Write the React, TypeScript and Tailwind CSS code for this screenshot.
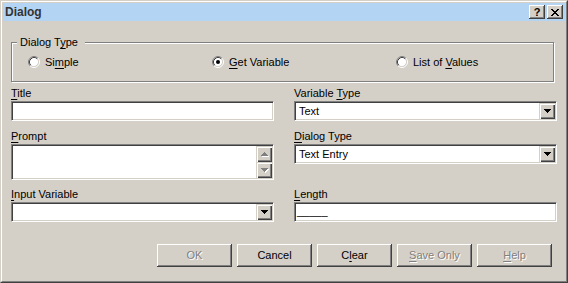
import type { ReactNode } from "react";

// classic 3D edges, reused by every control
const sunken =
  "bg-white border border-t-[#808080] border-l-[#808080] border-r-white border-b-white shadow-[inset_1px_1px_0_#404040,inset_-1px_-1px_0_#d4d0c8]";
const raised =
  "bg-[#d4d0c8] shadow-[inset_-1px_-1px_0_#404040,inset_1px_1px_0_#ffffff,inset_-2px_-2px_0_#808080,inset_2px_2px_0_#d4d0c8]";
const smallRaised =
  "bg-[#d4d0c8] shadow-[inset_1px_1px_0_#d4d0c8,inset_2px_2px_0_#ffffff,inset_-1px_-1px_0_#404040,inset_-2px_-2px_0_#808080]";
const disabled = "text-[#808080] [text-shadow:1px_1px_0_#ffffff]";

function Key({ children }: { children: ReactNode }) {
  return <span className="underline underline-offset-[2px]">{children}</span>;
}

function Radio({ checked }: { checked?: boolean }) {
  return (
    <svg width="12" height="12" viewBox="0 0 12 12" className="shrink-0">
      <circle cx="6" cy="6" r="4.5" fill="#fff" />
      <path d="M2.11 9.89A5.5 5.5 0 0 1 9.89 2.11" stroke="#808080" fill="none" />
      <path d="M9.89 2.11A5.5 5.5 0 0 1 2.11 9.89" stroke="#fff" fill="none" />
      <path d="M2.82 9.18A4.5 4.5 0 0 1 9.18 2.82" stroke="#404040" fill="none" />
      <path d="M9.18 2.82A4.5 4.5 0 0 1 2.82 9.18" stroke="#d4d0c8" fill="none" />
      {checked && <circle cx="6" cy="6" r="2" fill="#000" />}
    </svg>
  );
}

function Arrow({ up, off }: { up?: boolean; off?: boolean }) {
  const d = up
    ? "M3 0h1v1H3zM2 1h3v1H2zM1 2h5v1H1zM0 3h7v1H0z"
    : "M0 0h7v1H0zM1 1h5v1H1zM2 2h3v1H2zM3 3h1v1H3z";
  return (
    <svg width="8" height="5" viewBox="0 0 8 5" shapeRendering="crispEdges">
      {off && <path d={d} fill="#fff" transform="translate(1 1)" />}
      <path d={d} fill={off ? "#808080" : "#000"} />
    </svg>
  );
}

function Label({ children }: { children: ReactNode }) {
  return <div className="mb-[2px] h-[13px] pt-[1px] leading-[13px] text-black">{children}</div>;
}

function Combo({ value = "" }: { value?: string }) {
  return (
    <div className={`${sunken} flex h-[20px] p-[1px]`}>
      <span className="flex-1 pl-[3px] pt-[1px] leading-[15px] text-black">{value}</span>
      <span className={`${smallRaised} flex w-[16px] items-center justify-center pl-[1px]`}>
        <Arrow />
      </span>
    </div>
  );
}

function Button({ children, off }: { children: ReactNode; off?: boolean }) {
  return (
    <div
      className={`${raised} flex h-[23px] w-[75px] items-center justify-center ${off ? disabled : "text-black"}`}
    >
      {children}
    </div>
  );
}

export default function App() {
  return (
    <div className="h-[283px] w-[568px] border border-t-[#d4d0c8] border-l-[#d4d0c8] border-r-[#404040] border-b-[#404040] bg-[#d4d0c8] font-['Liberation_Sans',Arial,sans-serif] text-[11px]">
      <div className="flex h-full flex-col border border-t-white border-l-white border-r-[#808080] border-b-[#808080] p-[1px]">
        {/* title bar */}
        <div className="flex h-[18px] items-center justify-between bg-[#b4d4f4] pl-[2px] pr-[2px]">
          <span className="text-[12px] font-bold text-[#333333]">Dialog</span>
          <div className="flex gap-[2px]">
            <span
              className={`${raised} flex h-[14px] w-[16px] items-center justify-center text-[11px] leading-none font-bold text-black`}
            >
              ?
            </span>
            <span className={`${raised} flex h-[14px] w-[16px] items-center justify-center`}>
              <svg width="8" height="7" viewBox="0 0 8 7" shapeRendering="crispEdges">
                <path
                  d="M0 0h2v1H0zM6 0h2v1H6zM1 1h2v1H1zM5 1h2v1H5zM2 2h4v1H2zM3 3h2v1H3zM2 4h4v1H2zM1 5h2v1H1zM5 5h2v1H5zM0 6h2v1H0zM6 6h2v1H6z"
                  fill="#000"
                />
              </svg>
            </span>
          </div>
        </div>

        <div className="flex flex-1 flex-col px-[8px]">
          {/* Dialog Type group */}
          <div className="relative mt-[21px] flex h-[40px] w-[543px] items-center border border-[#808080] pl-[16px] shadow-[1px_1px_0_#ffffff,inset_1px_1px_0_#ffffff]">
            <span className="absolute -top-[7px] left-[5px] bg-[#d4d0c8] pr-[7px] pl-[3px] leading-[13px] text-black">
              Dialog T<Key>y</Key>pe
            </span>
            <label className="flex w-[184px] items-center gap-[5px] text-black">
              <Radio />
              <span>
                Si<Key>m</Key>ple
              </span>
            </label>
            <label className="flex w-[184px] items-center gap-[5px] text-black">
              <Radio checked />
              <span>
                <Key>G</Key>et Variable
              </span>
            </label>
            <label className="flex w-[150px] items-center gap-[5px] text-black">
              <Radio />
              <span>
                List of <Key>V</Key>alues
              </span>
            </label>
          </div>

          {/* fields */}
          <div className="mt-[4px] grid grid-cols-2 gap-x-[20px]">
            <div>
              <Label>
                <Key>T</Key>itle
              </Label>
              <div className={`${sunken} h-[20px]`} />
            </div>
            <div>
              <Label>
                Variable <Key>T</Key>ype
              </Label>
              <Combo value="Text" />
            </div>

            <div className="mt-[8px]">
              <Label>
                <Key>P</Key>rompt
              </Label>
              <div className={`${sunken} flex h-[36px] justify-end p-[1px]`}>
                <div className="flex w-[16px] flex-col">
                  <span className={`${smallRaised} flex h-[16px] items-center justify-center pl-[1px]`}>
                    <Arrow up off />
                  </span>
                  <span className={`${smallRaised} flex h-[16px] items-center justify-center pl-[1px]`}>
                    <Arrow off />
                  </span>
                </div>
              </div>
            </div>
            <div className="mt-[8px]">
              <Label>
                <Key>D</Key>ialog Type
              </Label>
              <Combo value="Text Entry" />
            </div>

            <div className="mt-[7px]">
              <Label>
                <Key>I</Key>nput Variable
              </Label>
              <Combo />
            </div>
            <div className="mt-[7px]">
              <Label>
                <Key>L</Key>ength
              </Label>
              <div className={`${sunken} h-[20px] pl-[2px] pt-[1px] leading-[15px] text-black`}>_____</div>
            </div>
          </div>

          {/* buttons */}
          <div className="mt-[22px] mr-[5px] flex justify-end gap-[5px]">
            <Button off>OK</Button>
            <Button>Cancel</Button>
            <Button>
              C<Key>l</Key>ear
            </Button>
            <Button off>
              <Key>S</Key>ave Only
            </Button>
            <Button off>
              <Key>H</Key>elp
            </Button>
          </div>
        </div>
      </div>
    </div>
  );
}
